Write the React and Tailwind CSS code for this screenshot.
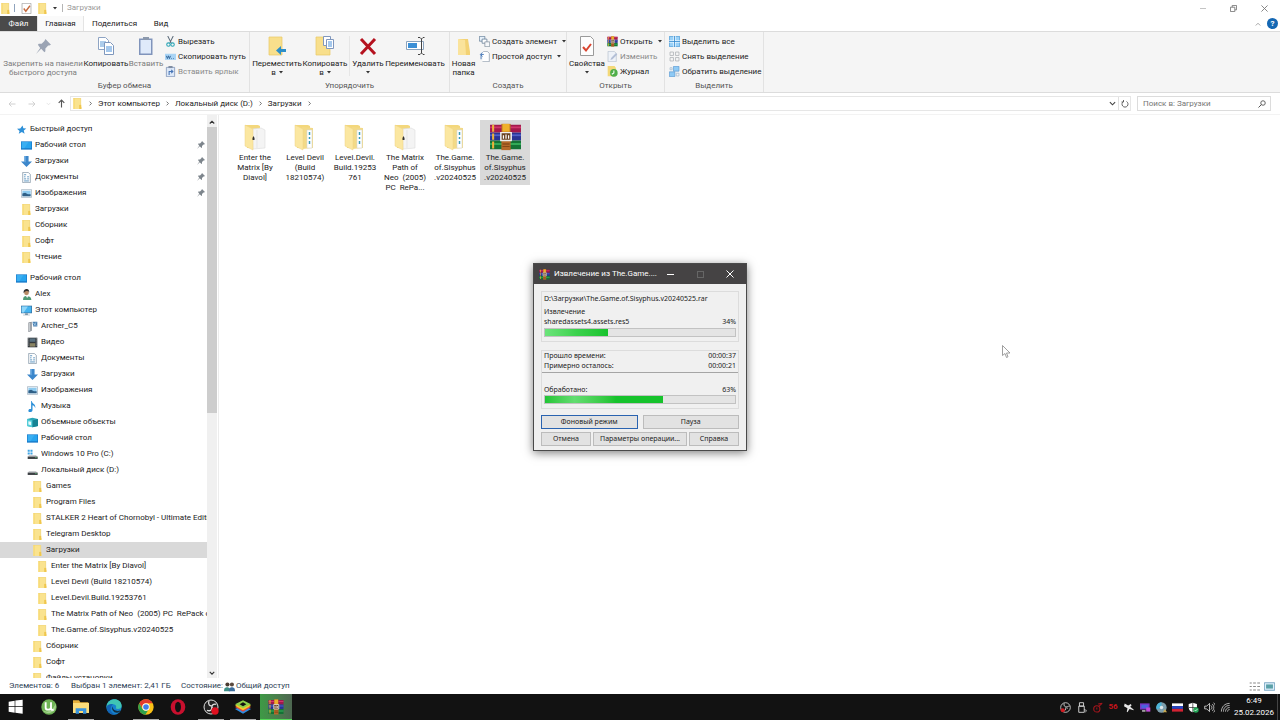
import React, { useState } from 'react';

const Svg = ({ size = 'size-[11px]', box = 16, children, ...rest }) => (
  <svg className={`${size} shrink-0`} viewBox={`0 0 ${box} ${box}`} fill="none" aria-hidden="true" {...rest}>
    {children}
  </svg>
);

const FolderIcon = ({ size }) => (
  <Svg size={size}>
    <path d="M2 0h11v12.500l1 .5v3H2z" fill="#fae38f" />
    <path d="M2 0h2v16H2z" fill="#f7da74" />
    <path d="M10.500 10h3v6h-3z" fill="#efc64d" />
    <path d="M2.400.4h10.300V10" stroke="#edd276" strokeWidth=".8" />
  </Svg>
);

const DesktopIcon = () => (
  <Svg>
    <path d="M0 2h16v12H0z" fill="#1678c8" />
    <path d="M1 3h14v9H1z" fill="#28a4ee" />
    <path d="M1 3h10L5 12H1z" fill="#4bb9f5" opacity=".5" />
  </Svg>
);

const PcIcon = () => (
  <Svg>
    <path d="M0 1h16v11H0z" fill="#356f9e" />
    <path d="M1 2h14v9H1z" fill="#45b4f0" />
    <path d="M1 2h9L4 11H1z" fill="#8fd6fa" />
    <path d="M6 12h4v2H6zM3 14h10v1H3z" fill="#7b95a8" />
  </Svg>
);

const DownIcon = () => (
  <Svg>
    <path d="M5 0h6v8h5l-8 8-8-8h5z" fill="#3c87cb" />
    <path d="M5 0h2v9H5z" fill="#68a8df" />
  </Svg>
);

const DocIcon = () => (
  <Svg>
    <path d="M2.500.5h8l3 3v12h-11z" fill="#fff" stroke="#72889b" />
    <path d="M4.500 4h3M4.500 7h2M9 7h2.500M4.500 10h3M9 10h2.500M4.500 13h7" stroke="#4b89b8" strokeWidth="1.300" />
  </Svg>
);

const ImageIcon = () => (
  <Svg>
    <path d="M.5 2.500h15v11H.5z" fill="#fff" stroke="#8fa3b5" />
    <path d="M2 4h12v8H2z" fill="#8ecbf0" />
    <path d="M2 8l4-1 4 2 4 0v3H2z" fill="#2f5f86" />
  </Svg>
);

const StarIcon = () => (
  <Svg>
    <path d="M9.500 2l1.200 4.300 4.300.4-3.700 2.800 1.200 4.500-4-2.500L4 14l1.200-4L1.500 6.800l4.700-.3z" fill="#2e90d8" />
  </Svg>
);

const UserIcon = () => (
  <Svg>
    <path d="M3 16c0-5 2-6 5-6s7 1 7 6z" fill="#4f9a74" />
    <circle cx="8" cy="5.500" r="3.500" fill="#b98c66" />
    <path d="M4 6c-1-4 2-6 4.500-6S12 2 12 5c-1-2-3-2-4-2S5 4 4 6z" fill="#33302e" />
    <path d="M7 10l2 3 2-3z" fill="#eee" />
  </Svg>
);

const RouterIcon = () => (
  <Svg>
    <path d="M2 2l5-1v13l-4 2H2z" fill="#8a8f96" />
    <path d="M4 3v12" stroke="#d9dde1" strokeWidth="1.500" />
    <path d="M8 1h7v7H9z" fill="#4a7fb0" />
    <path d="M9 3l5 4M13 2l-3 5" stroke="#b9dcf5" />
  </Svg>
);

const VideoIcon = () => (
  <Svg>
    <path d="M1 1h14v14H1z" fill="#33383d" />
    <path d="M4 2h8v5H4z" fill="#58707f" />
    <path d="M4 9h8v5H4z" fill="#8a8462" />
    <path d="M2.500 2v12M13.500 2v12" stroke="#c9d0d5" strokeDasharray="1.500 1.500" />
  </Svg>
);

const MusicIcon = () => (
  <Svg>
    <path d="M7 0c0 4 6 4 5 10-1-3-3-4-4-4v7c0 4-6 4-6 1 0-2 2-3 4-2V0z" fill="#2b8fd8" />
  </Svg>
);

const CubeIcon = () => (
  <Svg>
    <path d="M0 3l8-2 8 2v10l-8 2-8-2z" fill="#2aa6b8" />
    <path d="M0 3l8 2v10l-8-2z" fill="#54cdd8" />
    <path d="M2 6l4 1v5l-4-1z" fill="#e5fbfd" />
    <path d="M8 5l8-2v10l-8 2z" fill="#168394" />
  </Svg>
);

const DriveIcon = ({ system }) => (
  <Svg>
    {system && <path d="M1 1h3v3H1zM5 1h3v3H5zM1 5h3v3H1zM5 5h3v3H5z" fill="#3fa4e4" />}
    <path d="M3 9h10l2 2H1z" fill="#b8bcc0" />
    <path d="M1 11h14.500v3.500H1z" fill="#3d4145" />
    <path d="M12 12.500h2" stroke="#62e07c" />
  </Svg>
);

const RarIcon = ({ size }) => (
  <Svg size={size} box={32} preserveAspectRatio="none">
    <path d="M1 2h30v9H1z" fill="#a3184c" />
    <path d="M1 4h30v2H1z" fill="#d0356b" />
    <path d="M1 11h30v9H1z" fill="#2a3394" />
    <path d="M1 13h30v2H1z" fill="#5260c8" />
    <path d="M1 20h30v10H1z" fill="#137335" />
    <path d="M1 23h30v2H1z" fill="#36b35d" />
    <path d="M3 2h2v8H3zM3 12h2v7H3zM3 21h2v8H3z" fill="#edb13b" />
    <path d="M12 1h9v30h-9z" fill="#b5692a" />
    <path d="M13 1h7v9h-7z" fill="#efb02c" />
    <path d="M11.500 11h10v9h-10z" fill="#68401f" stroke="#eee" strokeWidth="1.500" />
    <path d="M14 14v4M16.500 13v5M19 14v4" stroke="#fff" strokeWidth="1.200" />
    <path d="M13 24h7M13 27h7" stroke="#7a3e13" />
  </Svg>
);

const PinIcon = ({ size = 'size-[8px]', color = '#7d858c' }) => (
  <Svg size={size}>
    <path d="M10 0l6 6-2 1-1 0-3 3 0 3-1 1-3.500-3.500L0 16l4.500-6.500L2 6l1-1h3l3-3z" fill={color} />
  </Svg>
);

const TREE = [
  { label: 'Быстрый доступ', icon: StarIcon, level: 0 },
  { label: 'Рабочий стол', icon: DesktopIcon, level: 1, pinned: true },
  { label: 'Загрузки', icon: DownIcon, level: 1, pinned: true },
  { label: 'Документы', icon: DocIcon, level: 1, pinned: true },
  { label: 'Изображения', icon: ImageIcon, level: 1, pinned: true },
  { label: 'Загрузки', icon: FolderIcon, level: 1 },
  { label: 'Сборник', icon: FolderIcon, level: 1 },
  { label: 'Софт', icon: FolderIcon, level: 1 },
  { label: 'Чтение', icon: FolderIcon, level: 1 },
  { label: 'Рабочий стол', icon: DesktopIcon, level: 0, spaced: true },
  { label: 'Alex', icon: UserIcon, level: 1 },
  { label: 'Этот компьютер', icon: PcIcon, level: 1 },
  { label: 'Archer_C5', icon: RouterIcon, level: 2 },
  { label: 'Видео', icon: VideoIcon, level: 2 },
  { label: 'Документы', icon: DocIcon, level: 2 },
  { label: 'Загрузки', icon: DownIcon, level: 2 },
  { label: 'Изображения', icon: ImageIcon, level: 2 },
  { label: 'Музыка', icon: MusicIcon, level: 2 },
  { label: 'Объемные объекты', icon: CubeIcon, level: 2 },
  { label: 'Рабочий стол', icon: DesktopIcon, level: 2 },
  { label: 'Windows 10 Pro (C:)', icon: () => <DriveIcon system />, level: 2 },
  { label: 'Локальный диск (D:)', icon: DriveIcon, level: 2 },
  { label: 'Games', icon: FolderIcon, level: 3 },
  { label: 'Program Files', icon: FolderIcon, level: 3 },
  { label: 'STALKER 2 Heart of Chornobyl - Ultimate Edition', icon: FolderIcon, level: 3 },
  { label: 'Telegram Desktop', icon: FolderIcon, level: 3 },
  { label: 'Загрузки', icon: FolderIcon, level: 3, active: true },
  { label: 'Enter the Matrix [By Diavol]', icon: FolderIcon, level: 4 },
  { label: 'Level Devil (Build 18210574)', icon: FolderIcon, level: 4 },
  { label: 'Level.Devil.Build.19253761', icon: FolderIcon, level: 4 },
  { label: 'The Matrix Path of Neo  (2005) PC  RePack от', icon: FolderIcon, level: 4 },
  { label: 'The.Game.of.Sisyphus.v20240525', icon: FolderIcon, level: 4 },
  { label: 'Сборник', icon: FolderIcon, level: 3 },
  { label: 'Софт', icon: FolderIcon, level: 3 },
  { label: 'Файлы установки', icon: FolderIcon, level: 3 },
];

const INDENT = ['pl-4', 'pl-[21px]', 'pl-[27px]', 'pl-8', 'pl-[37px]'];

const FILES = [
  { lines: ['Enter the', 'Matrix [By', 'Diavol]'], kind: 'open' },
  { lines: ['Level Devil', '(Build', '18210574)'], kind: 'full' },
  { lines: ['Level.Devil.', 'Build.19253', '761'], kind: 'full' },
  { lines: ['The Matrix', 'Path of', 'Neo  (2005)', 'PC  RePa...'], kind: 'open' },
  { lines: ['The.Game.', 'of.Sisyphus', '.v20240525'], kind: 'full' },
  { lines: ['The.Game.', 'of.Sisyphus', '.v20240525'], kind: 'rar' },
];

const BigFolder = ({ kind }) => (
  <Svg size="size-[28px]" box={28}>
    <g transform="translate(-1 0)">
      <path d="M5 2h13l2 1v22H7z" fill="#f3d77c" />
      {kind === 'open' ? (
        <>
          <path d="M12 6l9-1 4 2v18l-12 1z" fill="#f4f4f4" stroke="#dcdcdc" strokeWidth=".6" />
          <path d="M17 7v18" stroke="#dedede" strokeWidth=".7" />
        </>
      ) : (
        <>
          <path d="M12 4l11 1v20l-11 1z" fill="#f3da87" />
          <path d="M17 7h5v18h-5z" fill="#fff" stroke="#d4d8da" strokeWidth=".6" />
          <path d="M19.500 9v3M19.500 14v2M19.500 18v3" stroke="#3a9bb8" strokeWidth="1.500" />
        </>
      )}
      <path d="M5 2l8 4v21l-8-4z" fill="#fbe7a1" stroke="#ecd284" strokeWidth=".5" />
      {kind === 'open' && <path d="M12.500 15l1-2 1 2v2h-2z" fill="#333" />}
    </g>
  </Svg>
);

const Caret = () => (
  <svg className="ml-[3px] inline-block h-[3px] w-1 shrink-0" viewBox="0 0 4 3" aria-hidden="true">
    <path d="M0 0h4L2 2.500z" fill="#333" />
  </svg>
);

const BigButton = ({ icon, lines, width, caret, muted }) => (
  <button type="button" className={`flex ${width} flex-col items-center whitespace-nowrap pt-[3px] leading-[9px] ${muted ? 'text-[#7c7c7c]' : ''}`}>
    <span className="mb-[2px] flex h-[22px] items-center">{icon}</span>
    {lines.map((line, i) => (
      <span key={line} className="flex items-center">
        {line}
        {caret && i > 0 && i === lines.length - 1 && <Caret />}
      </span>
    ))}
    {caret && lines.length === 1 && <span className="-ml-[3px] flex h-[9px] items-center"><Caret /></span>}
  </button>
);

const SmallButton = ({ icon, label, caret, muted }) => (
  <button type="button" className={`flex h-[15px] items-center gap-[2px] whitespace-nowrap ${muted ? 'text-[#8a8a8a]' : ''}`}>
    {icon}
    <span>{label}</span>
    {caret && <Caret />}
  </button>
);

const Group = ({ label, width, children }) => (
  <section className={`flex ${width} shrink-0 flex-col border-r border-[#e2e2e2]`}>
    <div className="flex h-12">{children}</div>
    <p className="text-center leading-[11px] text-[#555]">{label}</p>
  </section>
);

const Ribbon = () => (
  <div className="flex h-[62px] shrink-0 border-y border-[#dcdcdc] bg-[#f5f5f5]">
    <Group label="Буфер обмена" width="w-[250px]">
      <BigButton
        width="ml-[3px] w-20"
        muted
        lines={['Закрепить на панели', 'быстрого доступа']}
        icon={<PinIcon size="size-[15px]" color="#9ba4b4" />}
      />
      <BigButton
        width="w-[46px]"
        lines={['Копировать']}
        icon={
          <Svg size="size-[20px]" box={20}>
            <path d="M2.500 1.500h7l3 3v9h-10z" fill="#fff" stroke="#8ea4c4" />
            <path d="M4 6h6M4 8h6M4 10h6" stroke="#5d9bd8" />
            <path d="M8.500 6.500h6l3 3v9h-9z" fill="#fff" stroke="#7e97bd" />
            <path d="M10 11h6M10 13h6M10 15h6" stroke="#4a90d9" />
          </Svg>
        }
      />
      <BigButton
        width="w-[34px]"
        muted
        lines={['Вставить']}
        icon={
          <Svg size="size-[20px]" box={20}>
            <path d="M3 2.500h13.500V19H3z" fill="#8094bb" />
            <path d="M4.500 4h10.500v13.500H4.500z" fill="#dfeafa" />
            <path d="M7 1h6v3H7z" fill="#8c99ad" />
          </Svg>
        }
      />
      <div className="ml-[2px] pt-[2px]">
        <SmallButton
          label="Вырезать"
          icon={
            <Svg>
              <path d="M4 0l5 10M12 0L7 10" stroke="#5c6b7a" strokeWidth="1.500" />
              <circle cx="5" cy="12.500" r="2.500" stroke="#27a3b4" strokeWidth="1.500" />
              <circle cx="11" cy="12.500" r="2.500" stroke="#27a3b4" strokeWidth="1.500" />
            </Svg>
          }
        />
        <SmallButton
          label="Скопировать путь"
          icon={
            <Svg>
              <path d="M0 4h16v9H0z" fill="#a9d4f5" />
              <path d="M2 7l1.500 4L5 7l1.500 4L8 7M9 11h1M12 11h1" stroke="#24588c" strokeWidth="1.200" />
            </Svg>
          }
        />
        <SmallButton
          label="Вставить ярлык"
          muted
          icon={
            <Svg>
              <path d="M2 2h12v13.500H2z" fill="#dce8f8" stroke="#7288ad" />
              <path d="M5 0h6v3H5z" fill="#7f8da3" />
              <path d="M6 13V8h5M9 5.500L11.500 8 9 10.500" stroke="#4573b5" strokeWidth="1.500" />
            </Svg>
          }
        />
      </div>
    </Group>
    <Group label="Упорядочить" width="w-[200px]">
      <BigButton
        width="ml-[3px] w-12"
        lines={['Переместить', 'в']}
        caret
        icon={
          <Svg size="size-[20px]" box={20}>
            <path d="M2 1h13v18H2z" fill="#f8df8c" stroke="#e9c966" strokeWidth=".7" />
            <path d="M9 14.500l5-4.500v3h5v3h-5v3z" fill="#2d8fc9" />
          </Svg>
        }
      />
      <BigButton
        width="w-12"
        lines={['Копировать', 'в']}
        caret
        icon={
          <Svg size="size-[20px]" box={20}>
            <path d="M1 1h14v18H1z" fill="#f8df8c" stroke="#e9c966" strokeWidth=".7" />
            <path d="M8.500.5h7v9h-7z" fill="#fff" stroke="#8097bd" />
            <path d="M11.500 3.500h7v9h-7z" fill="#fff" stroke="#8097bd" />
            <path d="M13 6h4M13 8h4M13 10h4" stroke="#4a90d9" />
          </Svg>
        }
      />
      <span className="my-1 w-px bg-[#e6e6e6]" />
      <BigButton
        width="w-9"
        lines={['Удалить']}
        caret
        icon={
          <Svg size="size-[20px]" box={20}>
            <path d="M3 3l14 15M17 3L3 18" stroke="#b5121f" strokeWidth="3" />
          </Svg>
        }
      />
      <BigButton
        width="w-[58px]"
        lines={['Переименовать']}
        icon={
          <Svg size="size-[20px]" box={20}>
            <path d="M1.500 5.500h17v8h-17z" fill="#fff" stroke="#8aa3bd" />
            <path d="M3 7h9v5H3z" fill="#3b8fd6" />
            <path d="M13 1.500h2l1.500 1.500L18 1.500h1.500M16.500 3v14M13 18.500h2l1.500-1.500 1.500 1.500h1.500" stroke="#444" />
          </Svg>
        }
      />
    </Group>
    <Group label="Создать" width="w-[117px]">
      <BigButton
        width="w-[30px]"
        lines={['Новая', 'папка']}
        icon={
          <Svg size="size-[20px]" box={20}>
            <path d="M5 3h9l2 13v3H5z" fill="#f3d274" />
            <path d="M4 3l7 1 1 15H4z" fill="#fae39b" />
          </Svg>
        }
      />
      <div className="ml-[2px] pt-[2px]">
        <SmallButton
          label="Создать элемент"
          caret
          icon={
            <Svg>
              <path d="M.5.5h8v7h-8z" fill="#e7f1fa" stroke="#54708c" />
              <path d="M4.500 4.500h7v6h-7z" fill="#fff" stroke="#54708c" />
              <path d="M8.500 8.500h7v7h-7z" fill="#f6f8fa" stroke="#7b8996" />
            </Svg>
          }
        />
        <SmallButton
          label="Простой доступ"
          caret
          icon={
            <Svg>
              <path d="M6 .5h6l3 3v12H5" fill="#fff" stroke="#8392a3" />
              <path d="M3 12V5h4M5 2L2 5l3 3" stroke="#3a6fb5" strokeWidth="1.300" />
            </Svg>
          }
        />
      </div>
    </Group>
    <Group label="Открыть" width="w-[98px]">
      <BigButton
        width="ml-px w-[38px]"
        lines={['Свойства']}
        caret
        icon={
          <Svg size="size-[20px]" box={20}>
            <path d="M3.500.5h10l3 3v16h-13z" fill="#fdfdfd" stroke="#9a9a9a" />
            <path d="M6 11l3 3.500L14 8" stroke="#d9442f" strokeWidth="2" />
          </Svg>
        }
      />
      <div className="ml-px pt-[2px]">
        <SmallButton label="Открыть" caret icon={<RarIcon />} />
        <SmallButton
          label="Изменить"
          muted
          icon={
            <Svg>
              <path d="M1.500.5h9l3 3v12h-12z" fill="#eef2f8" stroke="#b6c0ce" />
              <path d="M5 13l1-3 7-7 2 2-7 7z" fill="#b3bfd6" />
            </Svg>
          }
        />
        <SmallButton
          label="Журнал"
          icon={
            <Svg>
              <path d="M1 0h10l2 3v12H1z" fill="#f3d878" />
              <circle cx="10" cy="10" r="5.500" fill="#4fae4a" />
              <path d="M10 6.500V10l-3 2" stroke="#fff" strokeWidth="1.500" />
            </Svg>
          }
        />
      </div>
    </Group>
    <Group label="Выделить" width="w-[99px]">
      <div className="ml-1 pt-[2px]">
        <SmallButton
          label="Выделить все"
          icon={
            <Svg>
              <path d="M.5.500h15v15H.5z" fill="#9bd2f8" stroke="#3f93d4" />
              <path d="M8 0v16M0 8h16" stroke="#fff" strokeWidth="3" />
              <path d="M8 0v16M0 8h16" stroke="#2f88cf" strokeWidth="1.200" />
            </Svg>
          }
        />
        <SmallButton
          label="Снять выделение"
          icon={
            <Svg>
              <path d="M1.500 1.500h5v5h-5zM9.500 1.500h5v5h-5zM1.500 9.500h5v5h-5zM9.500 9.500h5v5h-5z" stroke="#a5a9ad" />
            </Svg>
          }
        />
        <SmallButton
          label="Обратить выделение"
          icon={
            <Svg>
              <path d="M6.500.5h8v7h-8zM.5 8.500h8v7h-8z" fill="#8ecaf5" stroke="#5f9bd0" />
              <path d="M1.500 2.500h3v3h-3zM10.500 10.500h4v4h-4z" stroke="#9cb4ca" />
            </Svg>
          }
        />
      </div>
    </Group>
  </div>
);

const TitleBar = () => (
  <header className="flex h-4 shrink-0 items-center">
    <div className="flex flex-1 items-center">
      <FolderIcon />
      <span className="ml-[3px] h-2 w-px bg-[#8fa3bd]" />
      <button type="button" aria-label="Свойства" className="ml-[6px]">
        <Svg size="size-[11px]">
          <path d="M1.500.5h13v15h-13z" fill="#fff" stroke="#9a9a9a" />
          <path d="M4 8l3 4 6-8" stroke="#c66a3d" strokeWidth="2" />
        </Svg>
      </button>
      <button type="button" aria-label="Новая папка" className="ml-[5px]">
        <FolderIcon />
      </button>
      <button type="button" aria-label="Настройка панели" className="ml-[2px] flex">
        <Caret />
      </button>
      <span className="ml-[5px] h-2 w-px bg-[#b5b5b5]" />
      <h1 className="ml-1 text-[#999]">Загрузки</h1>
    </div>
    <button type="button" aria-label="Свернуть" className="flex w-[31px] justify-center">
      <span className="h-px w-[6px] bg-[#c4c4c4]" />
    </button>
    <button type="button" aria-label="Восстановить" className="flex w-[31px] justify-center">
      <Svg size="size-[7px]" box={8}>
        <path d="M.5 2.500h5v5h-5zM2.500 2.500v-2h5v5h-2" stroke="#777" />
      </Svg>
    </button>
    <button type="button" aria-label="Закрыть" className="flex w-[31px] justify-center">
      <Svg size="size-[7px]" box={8}>
        <path d="M.5.500l7 7M7.500.500l-7 7" stroke="#777" />
      </Svg>
    </button>
  </header>
);

const Tabs = () => (
  <nav className="flex h-[15px] shrink-0 items-stretch">
    <button type="button" className="w-[37px] bg-[#4a4a4a] text-white">Файл</button>
    <button type="button" className="w-[47px] border-x border-[#e4e4e4] bg-[#fafafa]">Главная</button>
    <button type="button" className="w-[61px]">Поделиться</button>
    <button type="button" className="w-8">Вид</button>
    <div className="ml-auto flex items-center gap-[6px] pr-[2px]">
      <button type="button" aria-label="Свернуть ленту">
        <Svg size="size-[6px]" box={8}>
          <path d="M1 6l3-3 3 3" stroke="#888" />
        </Svg>
      </button>
      <button type="button" aria-label="Справка" className="flex size-[11px] items-center justify-center rounded-full bg-[#1467b3] font-bold text-white">
        ?
      </button>
    </div>
  </nav>
);

const Crumb = ({ children }) => (
  <>
    <Svg size="mx-[5px] size-[5px]" box={8}>
      <path d="M2.500 1l3 3-3 3" stroke="#555" strokeWidth="1.300" />
    </Svg>
    {children && <a href="#">{children}</a>}
  </>
);

const AddressBar = () => (
  <div className="flex h-[22px] shrink-0 items-center border-b border-[#f3f3f3]">
    <button type="button" aria-label="Назад" className="ml-2">
      <Svg size="size-[8px]"><path d="M15 8H2M7 3L2 8l5 5" stroke="#d0d0d0" strokeWidth="2" /></Svg>
    </button>
    <button type="button" aria-label="Вперед" className="ml-3">
      <Svg size="size-[8px]"><path d="M1 8h13M9 3l5 5-5 5" stroke="#d0d0d0" strokeWidth="2" /></Svg>
    </button>
    <button type="button" aria-label="Последние" className="ml-[10px]">
      <Svg size="size-[5px]" box={8}><path d="M1 3l3 3 3-3" stroke="#d8d8d8" /></Svg>
    </button>
    <button type="button" aria-label="Вверх" className="ml-[6px]">
      <Svg size="size-[9px]"><path d="M8 15V2M3 7l5-5 5 5" stroke="#555" strokeWidth="2" /></Svg>
    </button>
    <div className="ml-1 flex h-[15px] flex-1 items-center border border-[#e6e6e6] pl-px">
      <FolderIcon />
      <Crumb>Этот компьютер</Crumb>
      <Crumb>Локальный диск (D:)</Crumb>
      <Crumb>Загрузки</Crumb>
      <Crumb />
      <button type="button" aria-label="Журнал адресов" className="ml-auto mr-[2px]">
        <Svg size="size-[7px]" box={8}><path d="M1 2.500l3 3 3-3" stroke="#444" strokeWidth="1.300" /></Svg>
      </button>
      <button type="button" aria-label="Обновить" className="flex h-full w-3 items-center justify-center border-l border-[#e0e0e0]">
        <Svg size="size-[8px]"><path d="M11 3a6 6 0 1 1-6 0M5 0v4H1" stroke="#555" strokeWidth="1.800" /></Svg>
      </button>
    </div>
    <label className="ml-[6px] mr-[9px] flex h-[15px] w-[134px] items-center border border-[#dcdcdc] pl-[5px] pr-1">
      <input type="search" aria-label="Поиск" placeholder="Поиск в: Загрузки" className="min-w-0 flex-1 outline-none placeholder:text-[#757575]" />
      <Svg size="size-[8px]">
        <circle cx="10" cy="6" r="4.500" stroke="#555" strokeWidth="1.800" />
        <path d="M7 9l-6 6" stroke="#555" strokeWidth="2" />
      </Svg>
    </label>
  </div>
);

const Sidebar = () => (
  <aside className="flex w-[219px] shrink-0 border-r border-[#ececec]">
    <ul className="min-w-0 flex-1 overflow-hidden pt-[6px]">
      {TREE.map(({ label, icon: Icon, level, pinned, spaced, active }, i) => (
        <li key={i} className={spaced ? 'mt-[5px]' : ''}>
          <button
            type="button"
            className={`flex h-4 w-full items-center gap-[3px] ${INDENT[level]} ${active ? 'bg-[#d9d9d9]' : ''}`}
          >
            <Icon />
            <span className="min-w-0 flex-1 overflow-hidden whitespace-pre text-left">{label}</span>
            {pinned && <span className="mr-[2px]"><PinIcon /></span>}
          </button>
        </li>
      ))}
    </ul>
    <div className="mr-px flex w-[10px] flex-col bg-[#f0f0f0] pt-px">
      <button type="button" aria-label="Прокрутить вверх" className="flex h-[11px] items-center justify-center">
        <Svg size="size-[6px]" box={8}><path d="M1 6l3-3 3 3" stroke="#333" strokeWidth="1.500" /></Svg>
      </button>
      <div className="flex-1">
        <div className="h-[53%] bg-[#cdcdcd]" />
      </div>
      <button type="button" aria-label="Прокрутить вниз" className="flex h-[11px] items-center justify-center">
        <Svg size="size-[6px]" box={8}><path d="M1 2.500l3 3 3-3" stroke="#333" strokeWidth="1.500" /></Svg>
      </button>
    </div>
  </aside>
);

const FileGrid = ({ selected, onSelect }) => (
  <main className="flex flex-1 flex-wrap content-start items-start pl-[11px] pt-[5px]">
    {FILES.map((file, i) => (
      <button
        key={i}
        type="button"
        onClick={() => onSelect(i)}
        className={`flex w-[50px] flex-col items-center whitespace-pre pb-[2px] pt-[3px] leading-[10px] ${selected === i ? 'bg-[#d9d9d9]' : ''}`}
      >
        <span className="mb-[2px] flex h-[28px] items-center">
          {file.kind === 'rar' ? <RarIcon size="h-[28px] w-[33px]" /> : <BigFolder kind={file.kind} />}
        </span>
        {file.lines.map((line) => (
          <span key={line}>{line}</span>
        ))}
      </button>
    ))}
  </main>
);

const StatusBar = () => (
  <footer className="flex h-4 shrink-0 items-center pl-[9px] pr-[5px] text-[#2d4256]">
    <span className="w-[62px]">Элементов: 6</span>
    <span className="w-[110px]">Выбран 1 элемент: 2,41 ГБ</span>
    <span className="w-[43px]">Состояние:</span>
    <Svg>
      <path d="M0 15c0-5 2-6 4.500-6S9 10 9 15z" fill="#3c8f86" />
      <path d="M7 15c0-5 2-6 4.500-6s4.500 1 4.500 6z" fill="#3c6e9e" />
      <circle cx="5" cy="5" r="3" fill="#4b3b31" />
      <circle cx="11.500" cy="5" r="3" fill="#5b4a3e" />
    </Svg>
    <span className="ml-px">Общий доступ</span>
    <div className="ml-auto flex gap-1">
      <button type="button" aria-label="Таблица">
        <Svg><path d="M1 3h3M6 3h4M12 3h4M1 8h3M6 8h4M12 8h4M1 13h3M6 13h4M12 13h4" stroke="#888" strokeWidth="1.500" /></Svg>
      </button>
      <button type="button" aria-label="Крупные значки">
        <Svg>
          <path d="M.5 2.500h15v11H.5z" fill="#dff0fb" stroke="#4d87ad" />
          <path d="M3 5h10v6H3z" fill="#5aa0a8" />
        </Svg>
      </button>
    </div>
  </footer>
);

const Progress = ({ value, label, fill }) => (
  <div role="progressbar" aria-label={label} aria-valuenow={value} className="h-[9px] border border-[#c2c2c2] bg-[#e4e4e4]">
    <div className={`h-full bg-linear-to-r ${fill}`} style={{ width: `${value - 1}%` }} />
  </div>
);

const DialogButton = ({ children, className = 'border-[#bcbcbc]' }) => (
  <button type="button" className={`h-[14px] whitespace-nowrap border bg-[#e2e2e2] ${className}`}>
    {children}
  </button>
);

const ExtractDialog = () => (
  <div
    role="dialog"
    aria-label="Извлечение из The.Game...."
    className="absolute left-1/2 top-[263px] w-[214px] -translate-x-1/2 border border-[#4a4a4a] bg-[#f0f0f0] font-['Tahoma','Noto_Sans',sans-serif] text-[7px] leading-[10px] text-[#222] shadow-[0_2px_9px_rgba(0,0,0,0.5)]"
  >
    <div className="flex h-5 items-center bg-[#454344] pl-[5px] font-['Roboto',sans-serif] text-[8px] text-white">
      <RarIcon />
      <span className="ml-1 min-w-0 flex-1 whitespace-nowrap">Извлечение из The.Game....</span>
      <button type="button" aria-label="Свернуть" className="flex w-[30px] shrink-0 justify-center">
        <span className="h-px w-[7px] bg-white" />
      </button>
      <button type="button" aria-label="Развернуть" disabled className="flex w-[30px] shrink-0 justify-center">
        <span className="size-[7px] border border-[#666]" />
      </button>
      <button type="button" aria-label="Закрыть" className="mr-px flex w-[30px] shrink-0 justify-center">
        <Svg size="size-[8px]" box={8}><path d="M.5.500l7 7M7.500.500l-7 7" stroke="#fff" /></Svg>
      </button>
    </div>
    <div className="px-[7px] pb-1 pt-[7px]">
      <section className="border border-[#dcdcdc] px-[2px] pb-1 pt-[2px]">
        <p>D:\Загрузки\The.Game.of.Sisyphus.v20240525.rar</p>
        <p className="mt-[3px]">Извлечение</p>
        <p className="mb-px flex justify-between"><span>sharedassets4.assets.res5</span><span>34%</span></p>
        <Progress value={34} label="Извлечение" fill="from-[#6be47a] via-[#3bd24d] to-[#16c32c]" />
      </section>
      <section className="mt-2 border border-[#dcdcdc]">
        <div className="border-b border-[#a5a5a5] px-[2px] pb-px">
          <p className="flex justify-between"><span>Прошло времени:</span><span>00:00:37</span></p>
          <p className="flex justify-between"><span>Примерно осталось:</span><span>00:00:21</span></p>
        </div>
        <div className="px-[2px] pb-1 pt-3">
          <p className="flex justify-between"><span>Обработано:</span><span>63%</span></p>
          <Progress value={63} label="Обработано" fill="from-[#1fc534] via-[#62dd70] via-25% to-[#16c32c] to-60%" />
        </div>
      </section>
      <div className="mt-[6px] grid grid-cols-2 gap-[5px]">
        <DialogButton className="border-[#2a63b0]">Фоновый режим</DialogButton>
        <DialogButton>Пауза</DialogButton>
      </div>
      <div className="mt-[3px] flex gap-[2px]">
        <DialogButton className="w-[50px] border-[#bcbcbc]">Отмена</DialogButton>
        <DialogButton className="flex-1 border-[#bcbcbc]">Параметры операции...</DialogButton>
        <DialogButton className="w-[50px] border-[#bcbcbc]">Справка</DialogButton>
      </div>
    </div>
  </div>
);

const APPS = [
  {
    name: 'Пуск',
    icon: <path d="M1 4l9-1.500V11H1zM11 2.300L22 1v10H11zM1 12h9v8.500L1 19zM11 12h11v10l-11-1.300z" fill="#fff" />,
  },
  {
    name: 'uTorrent',
    icon: (
      <>
        <circle cx="12" cy="12" r="11.500" fill="#6fb356" />
        <path d="M2 17C8 20 16 20 22 7a11.500 11.500 0 0 1-20 10z" fill="#a2d18c" />
        <path d="M7 5v8c0 4 7 4 8 0V5M15 13c0 3 1 4 4 3" stroke="#fff" strokeWidth="2.800" />
      </>
    ),
  },
  {
    name: 'Проводник',
    bar: 'bg-[#a9a9a9]',
    icon: (
      <>
        <path d="M0 2h9l2 3h12v5H0z" fill="#e5b03c" />
        <path d="M0 6h24v15H0z" fill="#fbdc7a" />
        <path d="M4 22v-8h16v8h-5v-4H9v4z" fill="#3b94dc" />
      </>
    ),
  },
  {
    name: 'Edge',
    icon: (
      <>
        <circle cx="12" cy="12" r="11.500" fill="#1683cf" />
        <path d="M1 10C3-3 23-3 23.500 10c0 5-6 6-9 4 2-3 0-6-4-6-5 0-9 3-9.500 5z" fill="#3fc5b4" />
        <path d="M8 11c-3 6 1 11 7 12-7 2-14-3-14-11 1-4 6-5 10-4-1 0-2 1-3 3z" fill="#1264b5" />
        <path d="M10 11c0 7 7 8 12 6-2 5-9 5-12 0-1-2-1-4 0-6z" fill="#111" opacity=".75" />
      </>
    ),
  },
  {
    name: 'Chrome',
    bar: 'bg-[#a9a9a9]',
    icon: (
      <>
        <circle cx="12" cy="12" r="11.500" fill="#fbc116" />
        <path d="M2 6.200A11.500 11.500 0 0 1 22 6.200H12a6 6 0 0 0-5.500 8.500z" fill="#e33b2e" />
        <path d="M2 6.200A11.500 11.500 0 0 0 11 23.500l5.500-9a6 6 0 0 1-10 .5z" fill="#2fa24c" />
        <circle cx="12" cy="12" r="5.500" fill="#fff" />
        <circle cx="12" cy="12" r="4.200" fill="#3f7fe8" />
      </>
    ),
  },
  {
    name: 'Opera',
    icon: (
      <>
        <ellipse cx="12" cy="12" rx="11" ry="11.500" fill="#c8102e" />
        <ellipse cx="12" cy="12" rx="4.500" ry="8" fill="#111" />
      </>
    ),
  },
  {
    name: 'OBS',
    bar: 'bg-[#a9a9a9]',
    icon: (
      <>
        <circle cx="12" cy="12" r="10.500" fill="#222" stroke="#ddd" strokeWidth="1.500" />
        <path d="M9 3c-2 5 1 8 5 7M20 8c-5-1-8 2-6 6M6 17c5 2 8-1 7-5" stroke="#ddd" strokeWidth="2" />
        <circle cx="18" cy="18" r="5.500" fill="#e01020" />
      </>
    ),
  },
  {
    name: 'BlueStacks',
    bar: 'bg-[#a9a9a9]',
    icon: (
      <>
        <path d="M0 15l12-5 12 5-12 7z" fill="#2f8de0" />
        <path d="M0 12l12-5 12 5-12 7z" fill="#e4483d" />
        <path d="M0 10l12-6 12 6-12 7z" fill="#f6c927" />
        <path d="M0 8l12-6 12 6-12 6z" fill="#8fd04a" />
        <path d="M7 8l5-3 5 3-5 3z" fill="#111" />
      </>
    ),
  },
];

const TRAY = [
  <>
    <circle cx="8" cy="8" r="7" stroke="#ddd" strokeWidth="1.200" />
    <path d="M6 2c-1 4 1 5 4 5M14 6c-4 0-5 2-3 4M4 12c4 1 5-1 4-4" stroke="#ddd" strokeWidth="1.200" />
    <circle cx="4" cy="12" r="3" fill="#d01c22" />
  </>,
  <>
    <path d="M5 1h6v5H5zM4 6h8v9H4z" stroke="#ddd" strokeWidth="1.300" />
    <path d="M12 11l3 1-1 3" stroke="#ddd" />
  </>,
  <>
    <circle cx="7" cy="10" r="4.500" stroke="#a3151c" strokeWidth="1.600" />
    <path d="M9 3l6-1M10 6l4-3M7 8v3" stroke="#a3151c" strokeWidth="1.500" />
  </>,
  null,
  <path d="M1 2l5 3 4-2 1 2-2 2 5 4v1l-6-2-3 5-1-1 1-5-5-3z" fill="#e6e6e6" />,
  <>
    <path d="M0 2h14v9H0z" fill="#7a35c5" />
    <path d="M2 4h10v5H2z" fill="#4a62dc" />
    <path d="M9 8h6v6H9z" fill="#c04ad8" />
    <path d="M3 13h5" stroke="#ccc" strokeWidth="2" />
  </>,
  <>
    <circle cx="8" cy="8" r="7.500" fill="#7d9eac" />
    <path d="M8 .5A7.500 7.500 0 0 0 1 11l7-3z" fill="#4bb4d8" />
    <circle cx="8" cy="8" r="2.500" fill="#dce6ea" />
    <path d="M10 15l3-5 3 5z" fill="#c8a84e" />
  </>,
  <>
    <path d="M0 2h16v4H0z" fill="#fff" />
    <path d="M0 6h16v4H0z" fill="#2746c5" />
    <path d="M0 10h16v4H0z" fill="#d22333" />
  </>,
  <>
    <path d="M7 1l6 2v5c0 4-3 6-6 7-3-1-6-3-6-7V3z" fill="#fff" />
    <path d="M7 1v14M1 8h12" stroke="#222" />
    <circle cx="11.500" cy="11.500" r="4" fill="#23a455" />
    <path d="M9.500 11.500l1.500 1.500 3-3" stroke="#fff" />
  </>,
  <path d="M1 6h3l4-4v12l-4-4H1zM10 5c2 2 2 4 0 6M12 3c3 3 3 7 0 10M14 1c4 4 4 10 0 14" stroke="#ddd" strokeWidth="1.200" />,
  <path d="M8 14c0-3 2-6 6-6M5 14c0-5 3-9 9-9M2 14C2 7 7 2 14 2M11 14c0-2 1-3 3-3" stroke="#ccc" strokeWidth="1.200" />,
];

const Taskbar = () => (
  <div className="flex h-[26px] shrink-0 items-stretch bg-[#121212] text-white">
    <div className="grid w-[292px] grid-cols-9">
      {APPS.map((app) => (
        <button key={app.name} type="button" aria-label={app.name} className="flex flex-col items-center">
          <span className="flex flex-1 items-center"><Svg size="size-4" box={24}>{app.icon}</Svg></span>
          <span className={`h-px w-[26px] ${app.bar || ''}`} />
        </button>
      ))}
      <button type="button" aria-label="WinRAR" className="flex flex-col items-center bg-linear-to-r from-[#3d9a45] to-[#4d6650]">
        <span className="flex flex-1 items-center"><RarIcon size="size-4" /></span>
        <span className="h-px w-full bg-[#55d957]" />
      </button>
    </div>
    <div className="ml-auto flex items-center">
      {TRAY.map((icon, i) => (
        <button key={i} type="button" aria-label={`Значок ${i + 1}`} className="flex w-4 justify-center">
          {icon ? <Svg size="size-[11px]">{icon}</Svg> : <span className="font-bold text-[#c8141c]">56</span>}
        </button>
      ))}
    </div>
    <time className="flex w-[42px] flex-col justify-center text-center leading-[12px]">
      <span>6:49</span>
      <span>25.02.2026</span>
    </time>
    <span className="mx-[2px] w-px bg-[#444]" />
  </div>
);

const App = () => {
  const [selected, setSelected] = useState(5);

  return (
    <div className="relative flex h-screen flex-col overflow-hidden bg-white font-['Roboto',sans-serif] text-[8px] leading-[10px] text-[#222]">
      <TitleBar />
      <Tabs />
      <Ribbon />
      <AddressBar />
      <div className="flex min-h-0 flex-1">
        <Sidebar />
        <FileGrid selected={selected} onSelect={setSelected} />
      </div>
      <StatusBar />
      <Taskbar />
      <ExtractDialog />
      <svg className="pointer-events-none absolute left-[1002px] top-[345px] h-[13px] w-[9px]" viewBox="0 0 9 13" aria-hidden="true">
        <path d="M.5.500v10l2.500-2 1.500 4 1.500-.7-1.500-3.800h3.500z" fill="#fff" stroke="#888" strokeWidth=".8" />
      </svg>
    </div>
  );
};

export default App;
